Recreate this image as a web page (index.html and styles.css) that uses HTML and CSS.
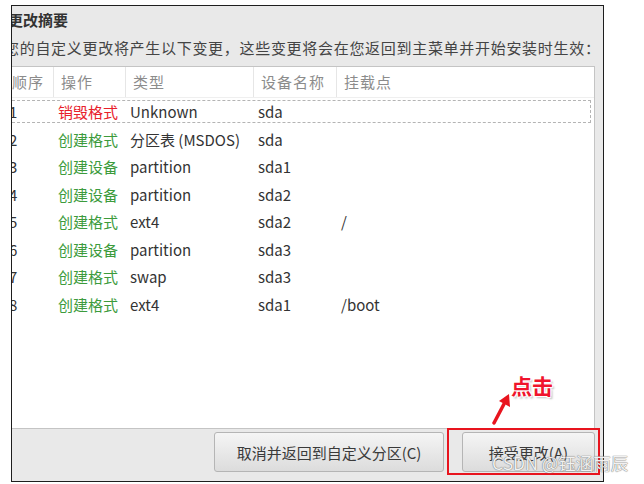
FILE: index.html
```html
<!DOCTYPE html>
<html lang="zh-CN">
<head>
  <meta charset="UTF-8">
  <title>更改摘要</title>
  <link rel="stylesheet" href="styles.css">
</head>
<body>
  <div class="dialog">
    <h2 class="title">更改摘要</h2>
    <p class="intro">您的自定义更改将产生以下变更，这些变更将会在您返回到主菜单并开始安装时生效：</p>

    <div class="changes">
      <div class="row head">
        <span>顺序</span>
        <span>操作</span>
        <span>类型</span>
        <span>设备名称</span>
        <span>挂载点</span>
      </div>
      <div class="row focus">
        <span>1</span>
        <span class="destroy">销毁格式</span>
        <span>Unknown</span>
        <span>sda</span>
        <span></span>
      </div>
      <div class="row">
        <span>2</span>
        <span class="create">创建格式</span>
        <span>分区表 (MSDOS)</span>
        <span>sda</span>
        <span></span>
      </div>
      <div class="row">
        <span>3</span>
        <span class="create">创建设备</span>
        <span>partition</span>
        <span>sda1</span>
        <span></span>
      </div>
      <div class="row">
        <span>4</span>
        <span class="create">创建设备</span>
        <span>partition</span>
        <span>sda2</span>
        <span></span>
      </div>
      <div class="row">
        <span>5</span>
        <span class="create">创建格式</span>
        <span>ext4</span>
        <span>sda2</span>
        <span>/</span>
      </div>
      <div class="row">
        <span>6</span>
        <span class="create">创建设备</span>
        <span>partition</span>
        <span>sda3</span>
        <span></span>
      </div>
      <div class="row">
        <span>7</span>
        <span class="create">创建格式</span>
        <span>swap</span>
        <span>sda3</span>
        <span></span>
      </div>
      <div class="row">
        <span>8</span>
        <span class="create">创建格式</span>
        <span>ext4</span>
        <span>sda1</span>
        <span>/boot</span>
      </div>
    </div>

    <div class="actions">
      <button class="btn cancel">取消并返回到自定义分区(C)</button>
      <button class="btn accept">接受更改(A)</button>
    </div>
  </div>

  <!-- annotation drawn over the screenshot -->
  <div class="mark-box"></div>
  <svg class="mark-arrow" width="30" height="40" viewBox="0 0 30 40">
    <line x1="8" y1="34" x2="18" y2="15" stroke="#e8141e" stroke-width="3.5" stroke-linecap="round"/>
    <polygon points="23,5 24,18 13,12" fill="#e8141e"/>
  </svg>
  <div class="mark-label">点击</div>
  <div class="watermark">CSDN @钰涵雨辰</div>
</body>
</html>
```

FILE: styles.css
```css
* {
  box-sizing: border-box;
}

body {
  margin: 0;
  width: 644px;
  height: 484px;
  overflow: hidden;
  position: relative;
  background: #ffffff;
  font-family: "Noto Sans CJK SC", sans-serif;
}

.dialog {
  margin: 5px 0 0 11px;
  width: 593px;
  height: 477px;
  border: 1px solid #1e1e1e;
  background: #e9e9e9;
  overflow: hidden;
  display: flex;
  flex-direction: column;
}

.title {
  margin: 4px 0 0 -4px;
  font-size: 15px;
  line-height: 20px;
  font-weight: bold;
  color: #333;
}

.intro {
  margin: 8px 0 0 -8px;
  font-size: 15px;
  line-height: 20px;
  letter-spacing: 0.7px;
  color: #444;
  white-space: nowrap;
}

.changes {
  margin: 8px 0 0 -6px;
  width: 589px;
  height: 363px;
  flex: none;
  border: 1px solid #c4c4c4;
  background: #ffffff;
}

.row {
  display: grid;
  grid-template-columns: 47px 72px 128px 83px 1fr;
  height: 27.5px;
  align-items: center;
  font-size: 15px;
  color: #333;
  white-space: nowrap;
}

.row span {
  padding-left: 4px;
}

.row span:first-child {
  padding-left: 2px;
}

.row.head {
  height: 31px;
  align-items: stretch;
  border-bottom: 1px solid #efefef;
  color: #8c8c8c;
  letter-spacing: 1px;
}

.row.head span {
  padding-left: 7px;
  line-height: 30px;
  border-right: 1px solid #e6e6e6;
}

.row.head span:first-child {
  padding-left: 5px;
}

.row.head span:last-child {
  border-right: none;
}

.row.focus {
  position: relative;
}

.row.focus::after {
  content: "";
  position: absolute;
  top: 2px;
  bottom: 3px;
  left: 0;
  right: 3px;
  border: 1px dashed #b4b4b4;
}

.destroy {
  color: #e8202a;
}

.create {
  color: #3c9b3c;
}

.actions {
  flex: 1;
  display: flex;
  justify-content: flex-end;
  align-items: flex-start;
  gap: 18px;
  padding: 3px 8px 0 0;
}

.btn {
  height: 40px;
  border: 1px solid #b5b5b5;
  border-radius: 3px;
  background: linear-gradient(#f5f5f5, #dcdcdc);
  font-family: "Noto Sans CJK SC", sans-serif;
  font-size: 15px;
  color: #3a3a3a;
}

.btn.cancel {
  width: 230px;
}

.btn.accept {
  width: 133px;
}

.mark-box {
  position: absolute;
  left: 447px;
  top: 428px;
  width: 153px;
  height: 47px;
  border: 2px solid #e8141e;
}

.mark-arrow {
  position: absolute;
  left: 486px;
  top: 389px;
}

.mark-label {
  position: absolute;
  left: 511px;
  top: 375px;
  font-size: 21px;
  line-height: 21px;
  font-weight: bold;
  color: #f0142c;
  text-shadow: 1px 1px 1px #fff, -1px -1px 1px #fff, 1px -1px 1px #fff, -1px 1px 1px #fff, 2px 2px 2px #bbb;
}

.watermark {
  position: absolute;
  left: 492px;
  top: 452px;
  font-size: 17.5px;
  line-height: 22px;
  color: rgba(255, 255, 255, 0.92);
  text-shadow: 0 0 1px #666, 0 0 1px #888;
  white-space: nowrap;
}
```
